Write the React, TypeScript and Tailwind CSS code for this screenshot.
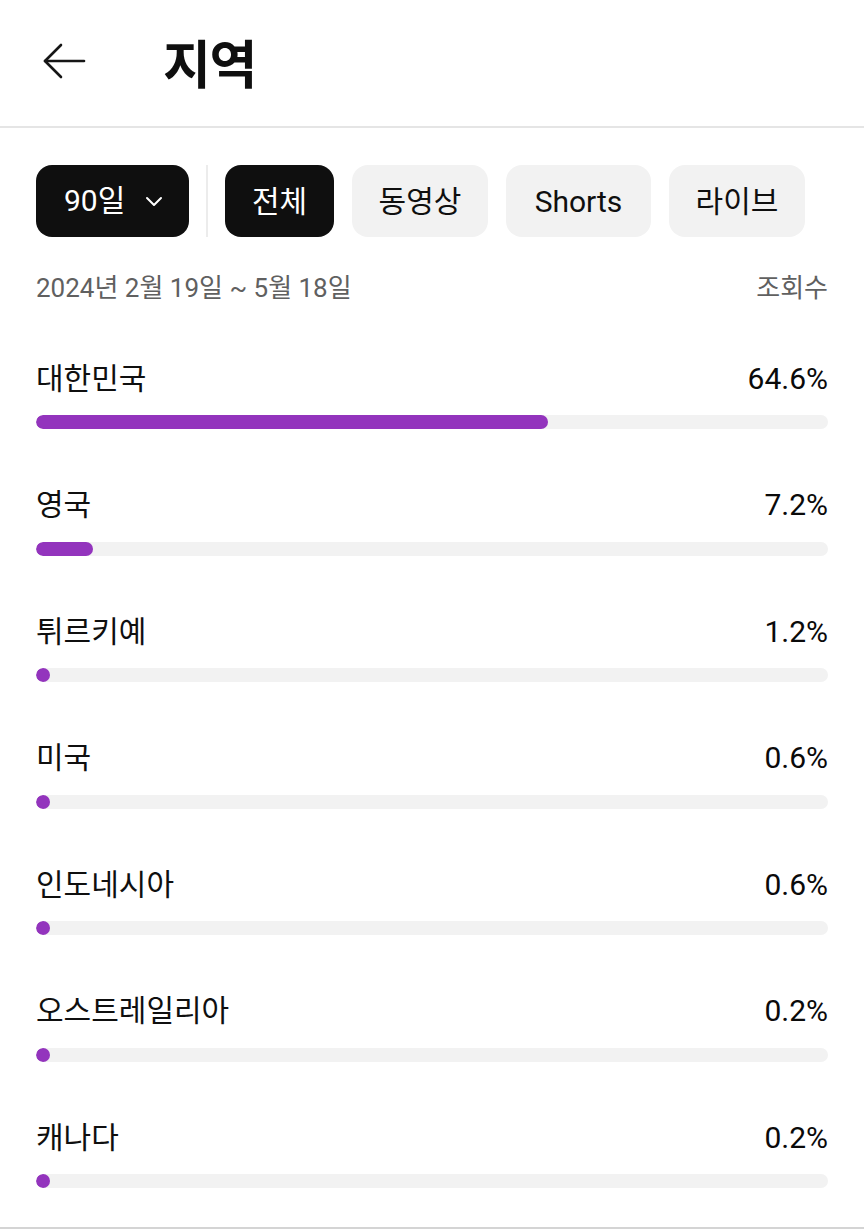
import React from "react";

const font = { fontFamily: "Roboto, 'Noto Sans CJK KR', 'Noto Sans', sans-serif" };

const regions = [
  { name: "대한민국", pct: 64.6 },
  { name: "영국", pct: 7.2 },
  { name: "튀르키예", pct: 1.2 },
  { name: "미국", pct: 0.6 },
  { name: "인도네시아", pct: 0.6 },
  { name: "오스트레일리아", pct: 0.2 },
  { name: "캐나다", pct: 0.2 },
];

const tabs = ["동영상", "Shorts", "라이브"];

export default function App() {
  return (
    <div className="w-[864px] h-[1229px] bg-white text-[#0f0f0f] overflow-hidden flex flex-col" style={font}>
      {/* Header */}
      <div className="h-[128px] shrink-0 flex items-center border-b-2 border-[#e5e5e5] pb-[4px]">
        <div className="w-[163px] pl-[42px] flex items-center">
          <svg width="44" height="38" viewBox="0 0 44 38" fill="none" stroke="#161616" strokeWidth="2.6" strokeLinecap="round" strokeLinejoin="round">
            <path d="M3 19H42" />
            <path d="M19 3 3 19l16 16" />
          </svg>
        </div>
        <h1 className="text-[52px] font-bold leading-none tracking-tight mt-[12px]">지역</h1>
      </div>

      {/* Filters */}
      <div className="flex items-center px-[36px] mt-[37px] h-[72px] shrink-0">
        <div className="h-[72px] w-[153px] rounded-[16px] bg-[#0f0f0f] text-white flex items-center pl-[28px] gap-[20px]">
          <span className="text-[30px] leading-none">90일</span>
          <svg width="18" height="12" viewBox="0 0 18 12" fill="none" stroke="white" strokeWidth="2" strokeLinecap="round" strokeLinejoin="round">
            <path d="M2 3l7 7 7-7" />
          </svg>
        </div>
        <div className="w-[2px] h-[72px] bg-[#ececec] mx-[17px]" />
        <div className="h-[72px] w-[109px] rounded-[16px] bg-[#0f0f0f] text-white flex items-center justify-center text-[30px]">
          전체
        </div>
        {tabs.map((t) => (
          <div
            key={t}
            className={`h-[72px] ml-[18px] rounded-[16px] bg-[#f2f2f2] flex items-center justify-center text-[30px] ${
              t === "Shorts" ? "w-[145px]" : "w-[136px]"
            }`}
          >
            {t}
          </div>
        ))}
      </div>

      {/* Date */}
      <div className="flex items-center justify-between px-[36px] mt-[33px] h-[36px] shrink-0 text-[26px] text-[#606060]">
        <span>2024년 2월 19일 ~ 5월 18일</span>
        <span>조회수</span>
      </div>

      {/* Rows */}
      <div className="flex flex-col flex-1 min-h-0 overflow-hidden mt-[52px] px-[36px]">
        {regions.map((r) => (
          <div key={r.name} className="h-[126.5px] shrink-0">
            <div className="flex items-center justify-between h-[40px]">
              <span className="text-[30px]">{r.name}</span>
              <span className="text-[30px] text-[#0a0a0a]">{r.pct.toFixed(1)}%</span>
            </div>
            <div className="mt-[17px] h-[14px] rounded-full bg-[#f2f2f2] overflow-hidden">
              <div
                className="h-full rounded-full bg-[#9334bd] min-w-[14px]"
                style={{ width: `${r.pct}%` }}
              />
            </div>
          </div>
        ))}
      </div>
      <div className="h-[2px] shrink-0 bg-[#d4d4d4]" />
    </div>
  );
}
